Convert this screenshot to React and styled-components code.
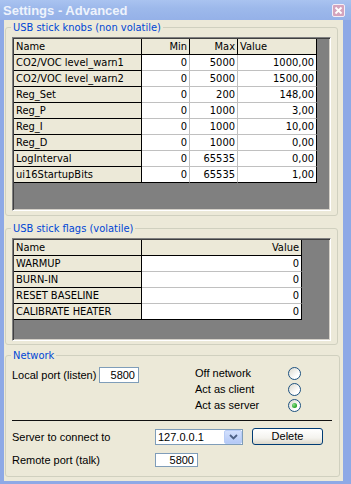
import React from "react";
import styled, { createGlobalStyle } from "styled-components";

const GlobalStyle = createGlobalStyle`
  html, body { margin: 0; padding: 0; background: #fff; }
  body { font-family: "Liberation Sans", Arial, sans-serif; font-size: 11px; color: #000; }
`;

const Frame = styled.div`
  width: 351px;
  height: 484px;
  box-sizing: border-box;
  display: flex;
  flex-direction: column;
  background: #8ea9e6;
  overflow: hidden;
`;

const TitleBar = styled.div`
  height: 20px;
  flex: none;
  display: flex;
  align-items: center;
  justify-content: space-between;
  padding: 0 6px 0 3px;
  background: linear-gradient(#a9c3f0, #9db9eb 40%, #95b1e8);
`;

const Title = styled.span`
  font-family: "Liberation Sans", Arial, sans-serif;
  font-weight: bold;
  font-size: 13px;
  color: #eef3fc;
`;

const CloseBtn = styled.span`
  width: 11px;
  height: 11px;
  border: 1px solid #f4eef6;
  border-radius: 2px;
  background: #d4a4bd;
  display: flex;
  align-items: center;
  justify-content: center;
`;

const Client = styled.div`
  flex: 1;
  margin: 0 8px 3px 4px;
  background: #ece9d8;
  display: flex;
  flex-direction: column;
  padding: 7px 0 0 1px;
`;

const GroupBox = styled.div`
  position: relative;
  box-sizing: border-box;
  width: ${(p) => p.$w}px;
  height: ${(p) => p.$h}px;
  margin-bottom: ${(p) => p.$mb || 0}px;
  border: 1px solid #d0d0bf;
  border-radius: 3px;
  padding: ${(p) => p.$pad || "9px 0 0 6px"};
`;

const Legend = styled.span`
  position: absolute;
  top: -7px;
  left: 5px;
  padding: 0 2px;
  line-height: 13px;
  font-family: "DejaVu Sans Condensed", "DejaVu Sans", sans-serif;
  background: #ece9d8;
  color: #0046d5;
`;

const GridFrame = styled.div`
  box-sizing: border-box;
  width: 319px;
  height: ${(p) => p.$h}px;
  border-style: solid;
  border-width: 1px;
  border-color: #808080 #fff #fff #808080;
  box-shadow: inset 1px 1px 0 #404040, inset -1px -1px 0 #d4d0c8;
  background: #808080;
  padding: 1px;
  overflow: hidden;
`;

const Table = styled.div`
  display: grid;
  grid-template-columns: ${(p) => p.$cols};
  grid-auto-rows: 16px;
  width: max-content;
`;

const Cell = styled.div`
  box-sizing: border-box;
  height: 16px;
  padding: 0 2px;
  line-height: 15px;
  font-family: "DejaVu Sans Condensed", "DejaVu Sans", sans-serif;
  white-space: nowrap;
  overflow: hidden;
  text-align: ${(p) => (p.$right ? "right" : "left")};
  background: ${(p) => (p.$fixed ? "#ece9d8" : "#fff")};
  border-right: 1px solid ${(p) => (p.$fixed || p.$lastCol ? "#000" : "#c0c0c0")};
  border-bottom: 1px solid ${(p) => (p.$fixed || p.$lastRow ? "#000" : "#c0c0c0")};
`;

const TopSection = styled.div`
  display: flex;
  align-items: flex-start;
  margin-top: 1px;
`;

const FieldRow = styled.div`
  display: flex;
  align-items: center;
  margin-top: ${(p) => p.$mt || 0}px;
`;

const Label = styled.span`
  width: ${(p) => p.$w}px;
  flex: none;
  white-space: nowrap;
`;

const Edit = styled.div`
  box-sizing: border-box;
  width: ${(p) => p.$w}px;
  height: ${(p) => p.$h}px;
  border: 1px solid #7f9db9;
  background: #fff;
  text-align: right;
  padding: 0 3px;
  line-height: ${(p) => p.$h - 2}px;
`;

const RadioList = styled.div`
  display: grid;
  grid-template-columns: 93px 13px;
  grid-auto-rows: 16px;
  align-items: center;
  margin: -2px 0 0 56px;
`;

const Radio = styled.span`
  position: relative;
  box-sizing: border-box;
  width: 13px;
  height: 13px;
  border-radius: 50%;
  border: 1px solid #1c5180;
  background: linear-gradient(135deg, #dcd9ce, #fff 70%);
  &::after {
    content: "";
    display: ${(p) => (p.$checked ? "block" : "none")};
    position: absolute;
    left: 3px;
    top: 3px;
    width: 5px;
    height: 5px;
    border-radius: 50%;
    background: radial-gradient(circle at 35% 35%, #8ee08e, #21a121 70%);
  }
`;

const Separator = styled.div`
  width: 320px;
  height: 1px;
  background: #111;
  margin-top: 7px;
`;

const Combo = styled.div`
  box-sizing: border-box;
  width: 88px;
  height: 16px;
  border: 1px solid #7f9db9;
  background: #fff;
  display: flex;
  align-items: stretch;
`;

const ComboText = styled.span`
  flex: 1;
  padding-left: 2px;
  line-height: 14px;
`;

const DropBtn = styled.span`
  width: 16px;
  border: 1px solid #b9cdf6;
  border-radius: 2px;
  background: linear-gradient(#d2e0fd, #b4c9f6);
  display: flex;
  align-items: center;
  justify-content: center;
`;

const Button = styled.div`
  box-sizing: border-box;
  width: 71px;
  height: 17px;
  margin-left: 9px;
  border: 1px solid #003c74;
  border-radius: 3px;
  background: linear-gradient(#ffffff, #f4f3ee 60%, #dcd8ca);
  text-align: center;
  line-height: 15px;
`;

const knobs = [
  ["CO2/VOC level_warn1", "0", "5000", "1000,00"],
  ["CO2/VOC level_warn2", "0", "5000", "1500,00"],
  ["Reg_Set", "0", "200", "148,00"],
  ["Reg_P", "0", "1000", "3,00"],
  ["Reg_I", "0", "1000", "10,00"],
  ["Reg_D", "0", "1000", "0,00"],
  ["LogInterval", "0", "65535", "0,00"],
  ["ui16StartupBits", "0", "65535", "1,00"],
];

const flags = ["WARMUP", "BURN-IN", "RESET BASELINE", "CALIBRATE HEATER"];

export default function App() {
  return (
    <>
      <GlobalStyle />
      <Frame>
        <TitleBar>
          <Title>Settings - Advanced</Title>
          <CloseBtn>
            <svg width="9" height="9" viewBox="0 0 9 9">
              <path d="M1.5 1.5L7.5 7.5M7.5 1.5L1.5 7.5" stroke="#fff" strokeWidth="1.8" />
            </svg>
          </CloseBtn>
        </TitleBar>
        <Client>
          <GroupBox $w={333} $h={189} $mb={12}>
            <Legend>USB stick knobs (non volatile)</Legend>
            <GridFrame $h={174}>
              <Table $cols="128px 48px 48px 79px">
                <Cell $fixed>Name</Cell>
                <Cell $fixed $right>Min</Cell>
                <Cell $fixed $right>Max</Cell>
                <Cell $fixed>Value</Cell>
                {knobs.map((r, i) => {
                  const last = i === knobs.length - 1;
                  return (
                    <React.Fragment key={r[0]}>
                      <Cell $fixed>{r[0]}</Cell>
                      <Cell $right $lastRow={last}>{r[1]}</Cell>
                      <Cell $right $lastRow={last}>{r[2]}</Cell>
                      <Cell $right $lastRow={last} $lastCol>{r[3]}</Cell>
                    </React.Fragment>
                  );
                })}
              </Table>
            </GridFrame>
          </GroupBox>

          <GroupBox $w={333} $h={117} $mb={10}>
            <Legend>USB stick flags (volatile)</Legend>
            <GridFrame $h={103}>
              <Table $cols="128px 160px">
                <Cell $fixed>Name</Cell>
                <Cell $fixed $right>Value</Cell>
                {flags.map((f, i) => (
                  <React.Fragment key={f}>
                    <Cell $fixed>{f}</Cell>
                    <Cell $right $lastCol $lastRow={i === flags.length - 1}>0</Cell>
                  </React.Fragment>
                ))}
              </Table>
            </GridFrame>
          </GroupBox>

          <GroupBox $w={335} $h={122} $pad="10px 0 0 6px">
            <Legend>Network</Legend>
            <TopSection>
              <FieldRow>
                <Label $w={87}>Local port (listen)</Label>
                <Edit $w={40} $h={16}>5800</Edit>
              </FieldRow>
              <RadioList>
                <span>Off network</span>
                <Radio />
                <span>Act as client</span>
                <Radio />
                <span>Act as server</span>
                <Radio $checked />
              </RadioList>
            </TopSection>
            <Separator />
            <FieldRow $mt={7}>
              <Label $w={143}>Server to connect to</Label>
              <Combo>
                <ComboText>127.0.0.1</ComboText>
                <DropBtn>
                  <svg width="9" height="6" viewBox="0 0 9 6">
                    <path d="M1 1L4.5 4.5L8 1" fill="none" stroke="#4d6185" strokeWidth="1.8" />
                  </svg>
                </DropBtn>
              </Combo>
              <Button>Delete</Button>
            </FieldRow>
            <FieldRow $mt={8}>
              <Label $w={143}>Remote port (talk)</Label>
              <Edit $w={43} $h={14}>5800</Edit>
            </FieldRow>
          </GroupBox>
        </Client>
      </Frame>
    </>
  );
}
